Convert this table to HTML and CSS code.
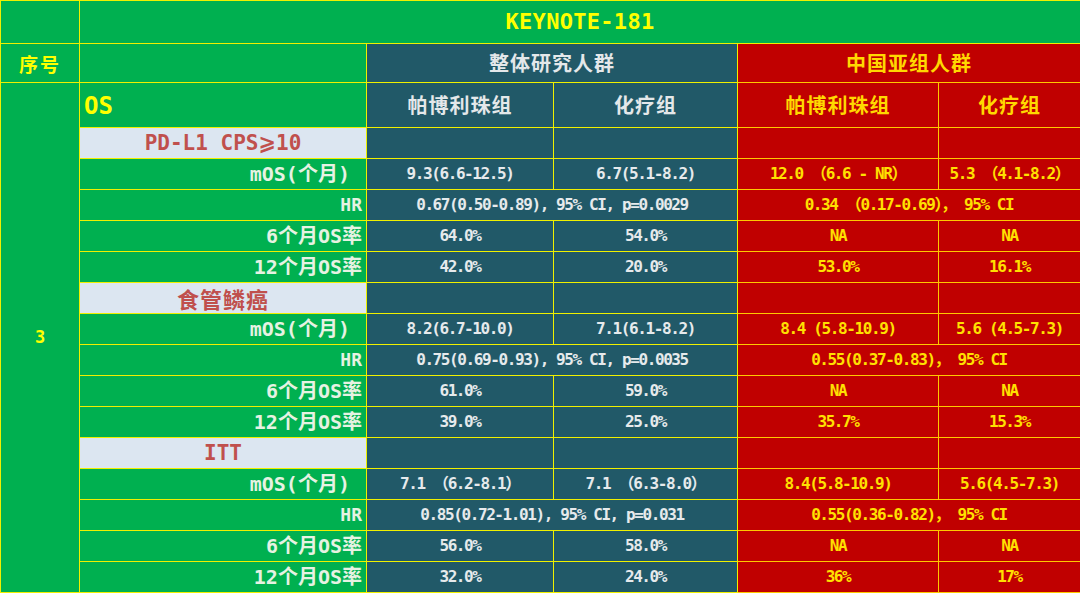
FILE: index.html
```html
<!DOCTYPE html>
<html lang="zh">
<head>
<meta charset="utf-8">
<title>KEYNOTE-181</title>
<link rel="stylesheet" href="styles.css">
</head>
<body>
<table class="grid">
  <colgroup>
    <col class="c0"><col class="c1"><col class="c2"><col class="c3"><col class="c4"><col class="c5">
  </colgroup>
  <tr class="r-title">
    <td class="g"></td>
    <td class="g title" colspan="5">KEYNOTE-181</td>
  </tr>
  <tr class="r-head">
    <td class="g idx">序号</td>
    <td class="g"></td>
    <td class="t th" colspan="2">整体研究人群</td>
    <td class="r th" colspan="2">中国亚组人群</td>
  </tr>
  <tr class="r-sub">
    <td class="g num" rowspan="16">3</td>
    <td class="g os">OS</td>
    <td class="t th">帕博利珠组</td>
    <td class="t th">化疗组</td>
    <td class="r th">帕博利珠组</td>
    <td class="r th">化疗组</td>
  </tr>

  <tr class="row">
    <td class="sec">PD-L1 CPS<span class="ge">⩾</span>10</td>
    <td class="t"></td><td class="t"></td><td class="r"></td><td class="r"></td>
  </tr>
  <tr class="row">
    <td class="lab">mOS(个月)&nbsp;</td>
    <td class="t d">9.3(6.6-12.5)</td><td class="t d">6.7(5.1-8.2)</td>
    <td class="r d">12.0 （6.6 - NR）</td><td class="r d">5.3 （4.1-8.2）</td>
  </tr>
  <tr class="row">
    <td class="lab hr">HR</td>
    <td class="t d" colspan="2">0.67(0.50-0.89), 95% CI, p=0.0029</td>
    <td class="r d" colspan="2">0.34 （0.17-0.69）， 95% CI</td>
  </tr>
  <tr class="row">
    <td class="lab">6个月OS率</td>
    <td class="t d">64.0%</td><td class="t d">54.0%</td>
    <td class="r d">NA</td><td class="r d">NA</td>
  </tr>
  <tr class="row">
    <td class="lab">12个月OS率</td>
    <td class="t d">42.0%</td><td class="t d">20.0%</td>
    <td class="r d">53.0%</td><td class="r d">16.1%</td>
  </tr>

  <tr class="row">
    <td class="sec cjk">食管鳞癌</td>
    <td class="t"></td><td class="t"></td><td class="r"></td><td class="r"></td>
  </tr>
  <tr class="row">
    <td class="lab">mOS(个月)&nbsp;</td>
    <td class="t d">8.2(6.7-10.0)</td><td class="t d">7.1(6.1-8.2)</td>
    <td class="r d">8.4 (5.8-10.9)</td><td class="r d">5.6 (4.5-7.3)</td>
  </tr>
  <tr class="row">
    <td class="lab hr">HR</td>
    <td class="t d" colspan="2">0.75(0.69-0.93), 95% CI, p=0.0035</td>
    <td class="r d" colspan="2">0.55(0.37-0.83)， 95% CI</td>
  </tr>
  <tr class="row">
    <td class="lab">6个月OS率</td>
    <td class="t d">61.0%</td><td class="t d">59.0%</td>
    <td class="r d">NA</td><td class="r d">NA</td>
  </tr>
  <tr class="row">
    <td class="lab">12个月OS率</td>
    <td class="t d">39.0%</td><td class="t d">25.0%</td>
    <td class="r d">35.7%</td><td class="r d">15.3%</td>
  </tr>

  <tr class="row">
    <td class="sec">ITT</td>
    <td class="t"></td><td class="t"></td><td class="r"></td><td class="r"></td>
  </tr>
  <tr class="row">
    <td class="lab">mOS(个月)&nbsp;</td>
    <td class="t d">7.1 （6.2-8.1）</td><td class="t d">7.1 （6.3-8.0）</td>
    <td class="r d">8.4(5.8-10.9)</td><td class="r d">5.6(4.5-7.3)</td>
  </tr>
  <tr class="row">
    <td class="lab hr">HR</td>
    <td class="t d" colspan="2">0.85(0.72-1.01), 95% CI, p=0.031</td>
    <td class="r d" colspan="2">0.55(0.36-0.82)， 95% CI</td>
  </tr>
  <tr class="row">
    <td class="lab">6个月OS率</td>
    <td class="t d">56.0%</td><td class="t d">58.0%</td>
    <td class="r d">NA</td><td class="r d">NA</td>
  </tr>
  <tr class="row">
    <td class="lab">12个月OS率</td>
    <td class="t d">32.0%</td><td class="t d">24.0%</td>
    <td class="r d">36%</td><td class="r d">17%</td>
  </tr>
</table>
</body>
</html>
```

FILE: styles.css
```css
html, body {
  margin: 0;
  padding: 0;
  background: #00b050;
}

.grid {
  width: 1080px;
  border-collapse: collapse;
  table-layout: fixed;
  font-family: "DejaVu Sans Mono", "Noto Sans CJK SC", monospace;
  font-weight: bold;
}

.c0 { width: 79px; }
.c1 { width: 287px; }
.c2 { width: 187px; }
.c3 { width: 184px; }
.c4 { width: 201px; }
.c5 { width: 142px; }

.grid td {
  border: 1px solid #f0f000;
  padding: 0;
  white-space: nowrap;
  overflow: hidden;
  line-height: 1;
}

.r-title { height: 43px; }
.r-head { height: 39px; }
.r-sub { height: 45px; }
.row { height: 31px; }

.g { background: #00b050; }
.t { background: #215968; }
.r { background: #c00000; }

.title {
  color: #ffff00;
  font-size: 22px;
  text-align: center;
  letter-spacing: 0.3px;
}

.idx {
  color: #ffff00;
  font-size: 19px;
  text-align: center;
  font-family: "Noto Sans CJK SC", sans-serif;
  letter-spacing: 2px;
}

.num {
  color: #ffff00;
  font-size: 17px;
  text-align: center;
}

.os {
  color: #ffff00;
  font-size: 24px;
  text-align: left;
  padding-left: 4px !important;
  padding-top: 2px !important;
  vertical-align: middle;
}

.th {
  font-size: 20px;
  text-align: center;
  font-family: "Noto Sans CJK SC", sans-serif;
  letter-spacing: 1px;
}
.t.th { color: #e4e8ea; }
.r.th { color: #ffd800; }

.sec {
  background: #dce6f1;
  color: #c0504d;
  font-size: 21px;
  text-align: center;
}
.sec.cjk {
  font-size: 22px;
  letter-spacing: 1px;
  font-family: "Noto Sans CJK SC", sans-serif;
}
.ge {
  font-family: "DejaVu Sans", "Noto Sans CJK SC", sans-serif;
}

.lab {
  background: #00b050;
  color: #e6f2e2;
  font-size: 20px;
  text-align: right;
  padding-right: 4px !important;
}
.lab.hr { font-size: 18px; }

.d {
  font-size: 16px;
  text-align: center;
  letter-spacing: -1.4px;
}
.t.d { color: #e6eaec; }
.r.d { color: #ffe000; }

.r { border-color: #ffc800 !important; }
```
